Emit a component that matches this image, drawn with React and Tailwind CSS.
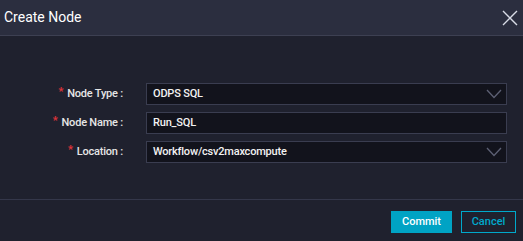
import React from "react";

function Chevron() {
  return (
    <svg width="16" height="10" viewBox="0 0 16 10" className="shrink-0">
      <path d="M1 1 L8 8.5 L15 1" fill="none" stroke="#5d6074" strokeWidth="1.3" />
    </svg>
  );
}

function Row({ label, value, select }) {
  return (
    <div className="flex items-center h-[22px]">
      <div className="w-[123px] flex justify-end items-center text-[11px] font-medium tracking-[-0.2px] text-[#e6e6e6]">
        <span className="text-[#e0343a] mr-[4px] text-[11px] font-bold relative top-[-2px]">*</span>
        <span>{label}</span>
      </div>
      <div className="ml-[23px] w-[361px] h-[22px] bg-[#12131c] border border-[#3a3d50] flex items-center justify-between pl-[6px] pr-[4px] text-[11px] font-medium tracking-[-0.2px] text-[#f2f2f2]">
        <span>{value}</span>
        {select && <Chevron />}
      </div>
    </div>
  );
}

export default function App() {
  return (
    <div className="w-[523px] h-[241px] bg-[#1f212e] flex flex-col" style={{ fontFamily: 'Roboto, "Liberation Sans", Arial, sans-serif' }}>
      <div className="h-[35px] bg-[#2b2e3f] flex items-center justify-between pl-[4px] pr-[5px] shrink-0">
        <span className="text-[14px] text-white">Create Node</span>
        <svg width="16" height="16" viewBox="0 0 16 16">
          <path d="M1 1 L15 15 M15 1 L1 15" stroke="#d8dbe6" strokeWidth="1.4" fill="none" />
        </svg>
      </div>
      <div className="h-px bg-[#3d4052] shrink-0" />
      <div className="flex-1 flex flex-col gap-[7px] pt-[47px]">
        <Row label="Node Type :" value="ODPS SQL" select />
        <Row label="Node Name :" value="Run_SQL" />
        <Row label="Location :" value="Workflow/csv2maxcompute" select />
      </div>
      <div className="h-px bg-[#34374a] shrink-0" />
      <div className="h-[41px] flex items-start justify-end gap-[9px] pt-[11px] pr-[7px] shrink-0">
        <button className="w-[61px] h-[22px] bg-[#00a3c4] text-white text-[11px] font-medium">Commit</button>
        <button className="w-[55px] h-[22px] border border-[#00a9cc] text-[#00a9cc] text-[11px] font-medium">Cancel</button>
      </div>
    </div>
  );
}
